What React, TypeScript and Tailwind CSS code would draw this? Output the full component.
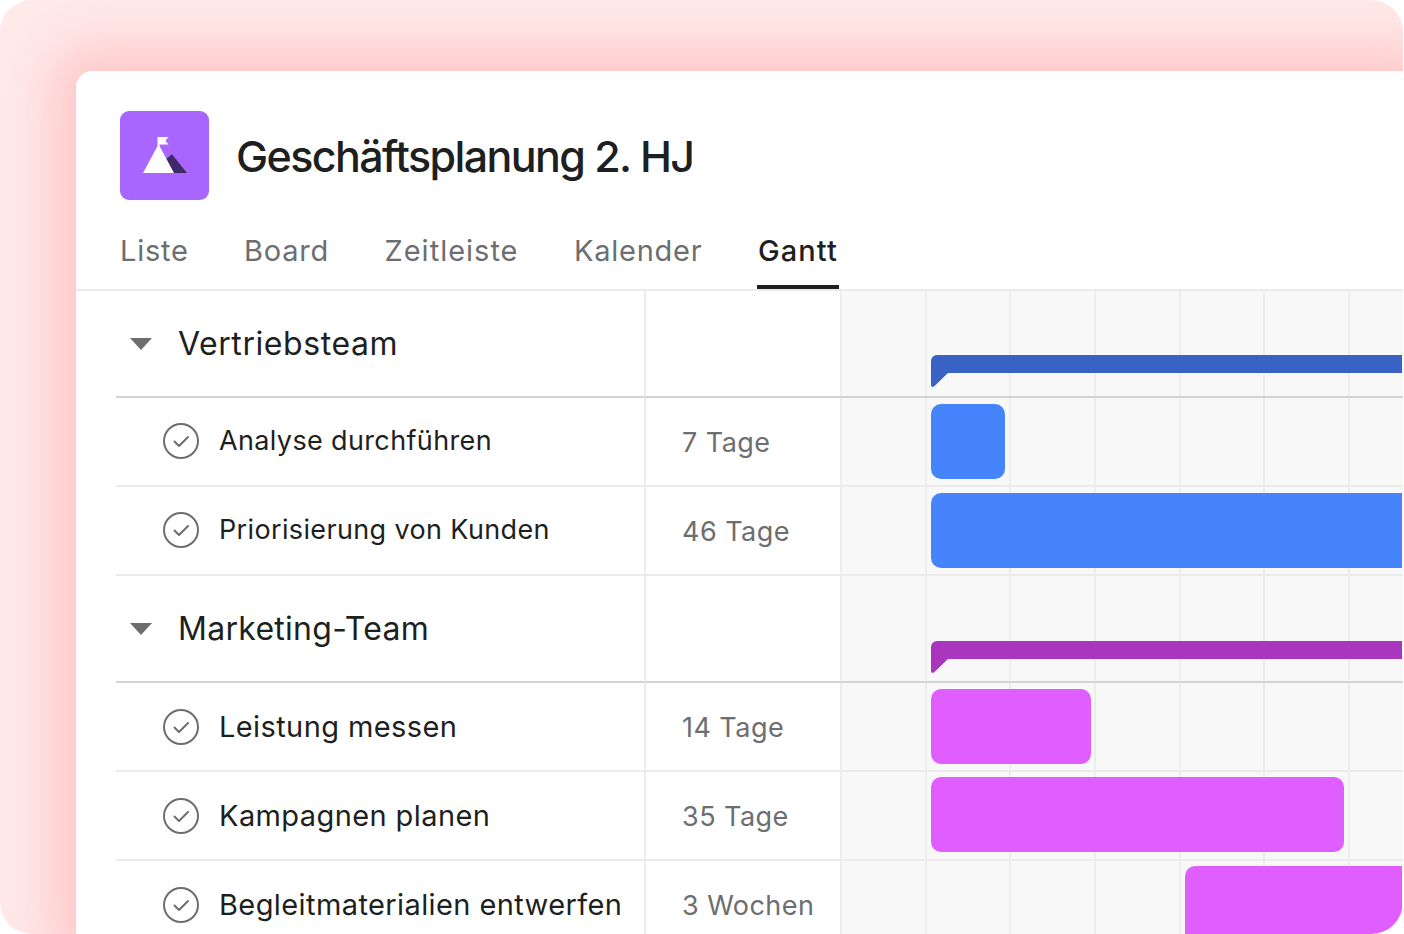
const font = "font-['Inter','Liberation_Sans',sans-serif]";

function Check() {
  return (
    <svg width="38" height="38" viewBox="0 0 38 38" fill="none" className="shrink-0">
      <circle cx="19" cy="19" r="17" stroke="#6d6e6f" strokeWidth="2" />
      <path d="M12.5 19.5l4.500 4.500 9-9" stroke="#6d6e6f" strokeWidth="2" strokeLinecap="round" strokeLinejoin="round" />
    </svg>
  );
}

function Caret() {
  return (
    <svg width="22" height="12" viewBox="0 0 22 12" className="shrink-0">
      <path d="M0 0h22L11 12z" fill="#6d6e6f" />
    </svg>
  );
}

function GanttCell({ className, children }: { className: string; children?: React.ReactNode }) {
  return (
    <div
      className={`bg-[#f9f8f8] bg-[repeating-linear-gradient(90deg,#eeeded_0,#eeeded_2px,transparent_2px,transparent_84.7px)] ${className}`}
    >
      {children}
    </div>
  );
}

function GroupRow({ name, color, top, track }: { name: string; color: string; top: string; track: string }) {
  return (
    <div className="grid grid-cols-[568px_196px_1fr] h-[107px]">
      <div className="pl-10">
        <div className="h-full border-b-2 border-[#d4d3d3] flex items-center pl-[14px] gap-[26px]">
          <Caret />
          <span className={`text-[32px] leading-10 text-[#1e1f21] ${track}`}>{name}</span>
        </div>
      </div>
      <div className="border-l-2 border-[#edeaea] border-b-2 border-b-[#d4d3d3]" />
      <GanttCell className={`border-b-2 border-[#d4d3d3] pl-[91px] pr-[1px] ${top}`}>
        <div className="relative h-[18px] rounded-tl-[6px]" style={{ background: color }}>
          <svg width="18" height="16" viewBox="0 0 18 16" className="absolute left-0 top-[17px]">
            <path d="M0 0h18L3 14.500C2 15.500 0 15 0 13z" fill={color} />
          </svg>
        </div>
      </GanttCell>
    </div>
  );
}

function TaskRow({
  name,
  dur,
  bar,
  color,
  small,
  last,
}: {
  name: string;
  dur: string;
  bar: string;
  color: string;
  small?: boolean;
  last?: boolean;
}) {
  const line = last ? "" : "border-b-2 border-[#edeaea]";
  const nameText = small ? "text-[27px] tracking-[0.36px]" : "text-[29px] tracking-[0.4px]";
  return (
    <div className={`grid grid-cols-[568px_196px_1fr] ${last ? "h-[73px]" : "h-[89px]"}`}>
      <div className="pl-10">
        <div className={`h-[87px] box-content flex items-center pl-[46px] ${line}`}>
          <div className={small ? "flex items-center gap-[19px] -mt-[2px]" : "flex items-center gap-[19px]"}>
            <Check />
            <span className={`leading-9 text-[#1e1f21] ${nameText}`}>{name}</span>
          </div>
        </div>
      </div>
      <div className={`border-l-2 border-[#edeaea] pl-[36px] ${line}`}>
        <div className="h-[87px] flex items-center pt-[3px] text-[27px] tracking-[0.45px] text-[#6d6e6f]">{dur}</div>
      </div>
      <GanttCell className={`pt-[6px] pr-[1px] ${line} ${last ? "" : "h-[89px]"}`}>
        <div className={bar} style={{ background: color }} />
      </GanttCell>
    </div>
  );
}

export default function App() {
  return (
    <div className={`w-[1404px] h-[934px] bg-white ${font}`}>
      <div className="w-[1403px] h-[934px] rounded-[32px] overflow-hidden bg-[#ffe9e9] pt-[71px] pl-[76px]">
        <div className="h-[863px] bg-white rounded-tl-[16px] shadow-[0_0_50px_25px_#ffc8c8]">
          <div className="h-[220px] border-b-2 border-[#edeaea]">
            <div className="flex items-center pl-[44px] pt-[40px] gap-[27px]">
              <div className="w-[89px] h-[89px] rounded-[9px] bg-[#a966ff] flex items-center justify-center">
                <svg width="44" height="36" viewBox="0 0 44 36" className="-mt-[1px]">
                  <path d="M29 17.300L44 36H28L23 22z" fill="#3e2a68" />
                  <path d="M14.500 0h11l-3 3.700 3 3.800h-9V9L31 36H0L14.500 9z" fill="#fff" />
                </svg>
              </div>
              <h1 className="text-[43px] leading-[56px] font-[450] tracking-[-1.6px] text-[#1e1f21]">Geschäftsplanung 2. HJ</h1>
            </div>
            <div className="flex gap-[55.5px] pl-[44px] mt-[27px] text-[29px] leading-[48px] tracking-[0.75px]">
              <span className="text-[#6d6e6f]">Liste</span>
              <span className="text-[#6d6e6f]">Board</span>
              <span className="text-[#6d6e6f] tracking-[1px]">Zeitleiste</span>
              <span className="text-[#6d6e6f]">Kalender</span>
              <span className="text-[#1e1f21] font-medium tracking-[1.1px] h-[62px] -mx-[1px] px-[1px] border-b-[4px] border-[#1e1f21]">Gantt</span>
            </div>
          </div>
          <GroupRow name="Vertriebsteam" color="#3962c5" top="pt-[64px]" track="tracking-[0.57px]" />
          <TaskRow small name="Analyse durchführen" dur="7 Tage" color="#4684fc" bar="ml-[91px] w-[74px] h-[75px] rounded-[10px]" />
          <TaskRow small name="Priorisierung von Kunden" dur="46 Tage" color="#4684fc" bar="ml-[91px] h-[75px] rounded-l-[10px]" />
          <GroupRow name="Marketing-Team" color="#aa36bf" top="pt-[65px]" track="tracking-[0.28px]" />
          <TaskRow name="Leistung messen" dur="14 Tage" color="#e05dff" bar="ml-[91px] w-[160px] h-[75px] rounded-[10px]" />
          <TaskRow name="Kampagnen planen" dur="35 Tage" color="#e05dff" bar="ml-[91px] -mt-[1px] w-[413px] h-[75px] rounded-[10px]" />
          <TaskRow last name="Begleitmaterialien entwerfen" dur="3 Wochen" color="#e05dff" bar="ml-[345px] -mt-[1px] h-[68px] rounded-tl-[10px]" />
        </div>
      </div>
    </div>
  );
}
